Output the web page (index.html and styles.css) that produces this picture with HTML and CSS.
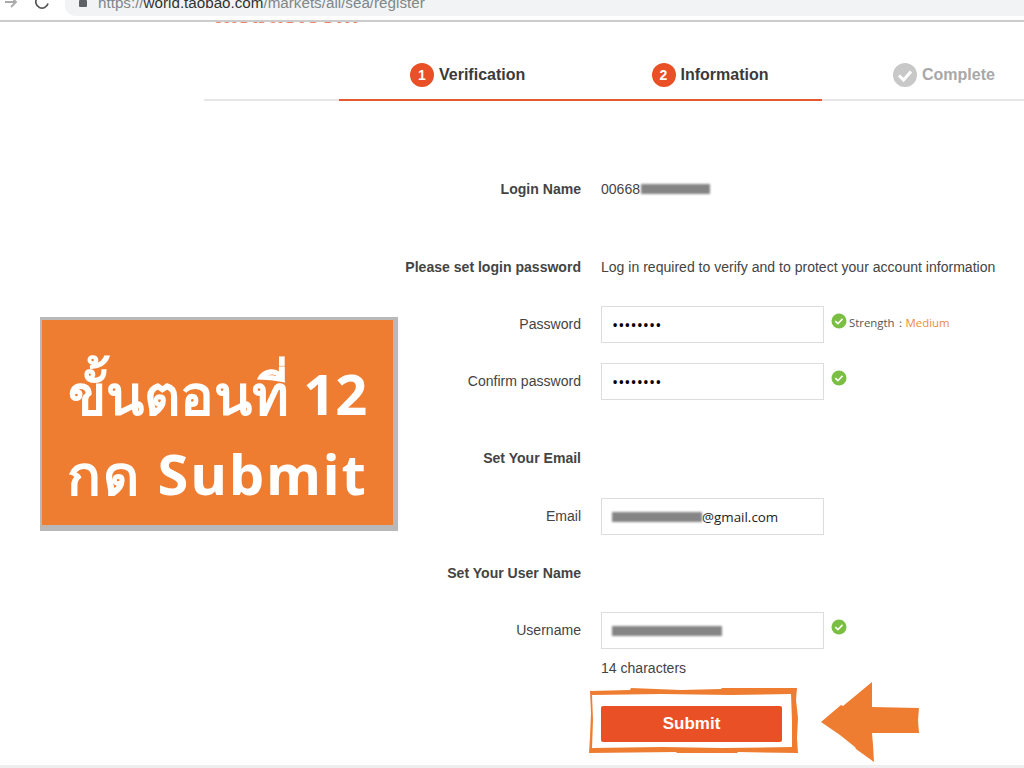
FILE: index.html
```html
<!DOCTYPE html>
<html lang="en">
<head>
  <meta charset="UTF-8" />
  <title>Register</title>
  <link rel="stylesheet" href="styles.css">
</head>
<body>
  <div class="toolbar">
    <svg class="nav-icon back" width="14" height="14" viewBox="0 0 14 14"><path d="M1 7h11M7 2l5 5-5 5" fill="none" stroke="#aaa" stroke-width="1.8"/></svg>
    <svg class="nav-icon reload" width="16" height="16" viewBox="0 0 16 16"><path d="M14 9.5A6.2 6.2 0 1 1 12.3 3.4M13.5 .5v4.500h-4.500" fill="none" stroke="#555" stroke-width="1.7"/></svg>
    <div class="address">
      <span class="lock"></span>
      <span class="url">https://<b>world.taobao.com</b>/markets/all/sea/register</span>
    </div>
  </div>
  <div class="logo-clip"><span>taobao.com</span></div>

  <div class="steps">
    <div class="step active"><i class="num">1</i>Verification</div>
    <div class="step active"><i class="num">2</i>Information</div>
    <div class="step done">
      <svg width="24" height="24" viewBox="0 0 24 24"><circle cx="12" cy="12" r="12" fill="#c8c8c8"/><path d="M6 12.500l4.500 4.500L18 8.500" fill="none" stroke="#fff" stroke-width="3"/></svg>
      Complete
    </div>
  </div>

  <div class="form">
    <div class="row text-row login-row"><label>Login Name</label><div class="value">00668<span class="redact login-redact"></span></div></div>
    <div class="row text-row pass-head"><label>Please set login password</label><div class="value">Log in required to verify and to protect your account information</div></div>
    <div class="row input-row pass-row">
      <label class="plain">Password</label>
      <input class="field secret" type="password" value="12345678">
      <svg class="ok" viewBox="0 0 16 16"><circle cx="8" cy="8" r="7.500" fill="#7abf43"/><path d="M4.300 8.200l2.600 2.500 4.600-4.800" fill="none" stroke="#fff" stroke-width="1.600"/></svg>
      <span class="strength">Strength：<em>Medium</em></span>
    </div>
    <div class="row input-row confirm-row">
      <label class="plain">Confirm password</label>
      <input class="field secret" type="password" value="12345678">
      <svg class="ok" viewBox="0 0 16 16"><circle cx="8" cy="8" r="7.500" fill="#7abf43"/><path d="M4.300 8.200l2.600 2.500 4.600-4.800" fill="none" stroke="#fff" stroke-width="1.600"/></svg>
    </div>
    <div class="row text-row email-head"><label>Set Your Email</label></div>
    <div class="row input-row email-row">
      <label class="plain">Email</label>
      <div class="field"><span class="redact email-redact"></span>@gmail.com</div>
    </div>
    <div class="row text-row user-head"><label>Set Your User Name</label></div>
    <div class="row input-row user-row">
      <label class="plain">Username</label>
      <div class="field"><span class="redact user-redact"></span></div>
      <svg class="ok" viewBox="0 0 16 16"><circle cx="8" cy="8" r="7.500" fill="#7abf43"/><path d="M4.300 8.200l2.600 2.500 4.600-4.800" fill="none" stroke="#fff" stroke-width="1.600"/></svg>
    </div>
    <div class="row text-row chars-row"><label></label><div class="value">14 characters</div></div>
    <div class="row submit-row"><label></label><button class="submit">Submit</button></div>
  </div>
  <div class="bottom-strip"></div>

  <div class="callout">
    <div class="callout-line">ขั้นตอนที่ 12</div>
    <div class="callout-line second">กด Submit</div>
  </div>

  <svg class="marker" width="1024" height="768" viewBox="0 0 1024 768">
    <path fill="#ee7d31" fill-rule="evenodd" d="M590 691l40-1 1-2 50 2 40-1 1-1 75 0-1 12 2 18-1 20 1 15-60-1-1 1-60 0-1-1-87 1 1-16 1-24zM592 695l1 25-1 28 70-1 60 1 70-1 0-26-1-27-60 1-70-1z"/>
    <path fill="#ee7d31" d="M821 722l20-17 2 1 29-24 0 25 47 1-1 12 1 13-47 0 1 12 1 17-18-13-1-2-15-12z"/>
  </svg>
</body>
</html>
```

FILE: styles.css
```css
html, body {
  margin: 0;
  height: 768px;
  overflow: hidden;
  background: #fff;
}
body {
  position: relative;
  font-family: "Liberation Sans", Arial, sans-serif;
  color: #444;
  font-size: 14.05px;
}

.toolbar {
  display: flex;
  align-items: flex-end;
  height: 20px;
  border-bottom: 2px solid #ccc;
  overflow: hidden;
}
.nav-icon {
  flex: none;
}
.back {
  margin: 0 0 11px 4px;
}
.reload {
  margin: 0 0 10px 16px;
}
.address {
  flex: 1;
  display: flex;
  align-items: flex-end;
  height: 16px;
  margin: 0 0 4px 15px;
  padding-left: 14px;
  background: #f1f3f4;
  border-bottom-left-radius: 10px;
}
.lock {
  width: 8px;
  height: 7px;
  margin-bottom: 9px;
  background: #5f6368;
  border-radius: 1px;
}
.url {
  margin: 0 0 5px 11px;
  color: #80868b;
  font-size: 15.2px;
  line-height: 16px;
  white-space: nowrap;
}
.url b {
  font-weight: normal;
  color: #333;
}

.logo-clip {
  display: flex;
  align-items: flex-end;
  height: 2px;
  margin-left: 213px;
  overflow: hidden;
}
.logo-clip span {
  color: #ee8468;
  font-size: 26px;
  font-weight: bold;
  line-height: 20px;
}

.steps {
  display: flex;
  height: 75px;
  margin-left: 204px;
  padding-left: 135px;
  border-bottom: 2px solid #e6e6e6;
}
.step {
  display: flex;
  align-items: center;
  gap: 5px;
  flex: none;
  box-sizing: border-box;
  width: 241.5px;
  height: 77px;
  padding: 27px 0 0 71px;
  border-bottom: 2px solid transparent;
  font-size: 16px;
  font-weight: bold;
  color: #3a3a3a;
}
.step.active {
  border-bottom-color: #e4592f;
}
.step.done {
  color: #a8a8a8;
}
.num {
  display: flex;
  align-items: center;
  justify-content: center;
  width: 24px;
  height: 24px;
  border-radius: 50%;
  background: #e95025;
  color: #fff;
  font-style: normal;
  font-size: 14px;
}

.row {
  display: flex;
  align-items: center;
}
.row label {
  flex: none;
  width: 581px;
  box-sizing: border-box;
  text-align: right;
  font-weight: bold;
  color: #444;
}
.row label.plain {
  padding-bottom: 2px;
  font-weight: normal;
}
.value {
  margin-left: 20px;
  white-space: nowrap;
}
.text-row {
  height: 20px;
}
.input-row {
  height: 37px;
}
.login-row { margin-top: 78px; }
.pass-head { margin-top: 58px; }
.pass-row { margin-top: 29px; }
.confirm-row { margin-top: 20px; }
.email-head { margin-top: 48px; }
.email-row { margin-top: 30px; }
.user-head { margin-top: 28px; }
.user-row { margin-top: 29px; }
.chars-row { margin-top: 9px; }
.submit-row { margin-top: 28px; }

.field {
  display: flex;
  align-items: center;
  flex: none;
  box-sizing: border-box;
  width: 223px;
  height: 37px;
  margin: 0 0 0 20px;
  padding: 0 10px;
  border: 1px solid #ddd;
  background: #fff;
  color: #222;
  font-family: "Open Sans", sans-serif;
  font-size: 13.4px;
}
.secret {
  color: #000;
  font-size: 16.4px;
}
.redact {
  display: inline-block;
  background: #858585;
  filter: blur(0.8px);
}
.login-redact {
  width: 69px;
  height: 10px;
  margin-left: 1px;
}
.email-redact {
  width: 90px;
  height: 10px;
}
.user-redact {
  width: 110px;
  height: 10px;
}
.ok {
  flex: none;
  width: 16px;
  height: 16px;
  margin: -7px 0 0 7px;
}
.strength {
  margin: -3px 0 0 2px;
  font-family: "Open Sans", sans-serif;
  font-size: 11.4px;
  color: #555;
}
.strength em {
  font-style: normal;
  color: #f08a3c;
}
.submit {
  width: 181px;
  height: 36px;
  margin-left: 20px;
  border: 0;
  border-radius: 2px;
  background: #e95025;
  color: #fff;
  font-family: "Liberation Sans", Arial, sans-serif;
  font-size: 17px;
  font-weight: bold;
}
.bottom-strip {
  position: absolute;
  left: 0;
  right: 0;
  bottom: 0;
  height: 3px;
  background: #eee;
}

.callout {
  position: absolute;
  left: 40px;
  top: 317px;
  width: 351px;
  height: 205px;
  border-style: solid;
  border-color: #b8b8b8;
  border-width: 3px 5px 6px 2px;
  background: #ee7d31;
  color: #fff;
  font-family: "Noto Sans", "Open Sans", "DejaVu Sans", sans-serif;
  font-size: 56px;
  font-weight: bold;
  text-align: center;
}
.callout-line {
  height: 80px;
  margin-top: 33px;
  line-height: 80px;
  white-space: nowrap;
}
.callout-line.second {
  margin-top: 0;
  letter-spacing: 2px;
}
.marker {
  position: absolute;
  left: 0;
  top: 0;
  pointer-events: none;
}
```
